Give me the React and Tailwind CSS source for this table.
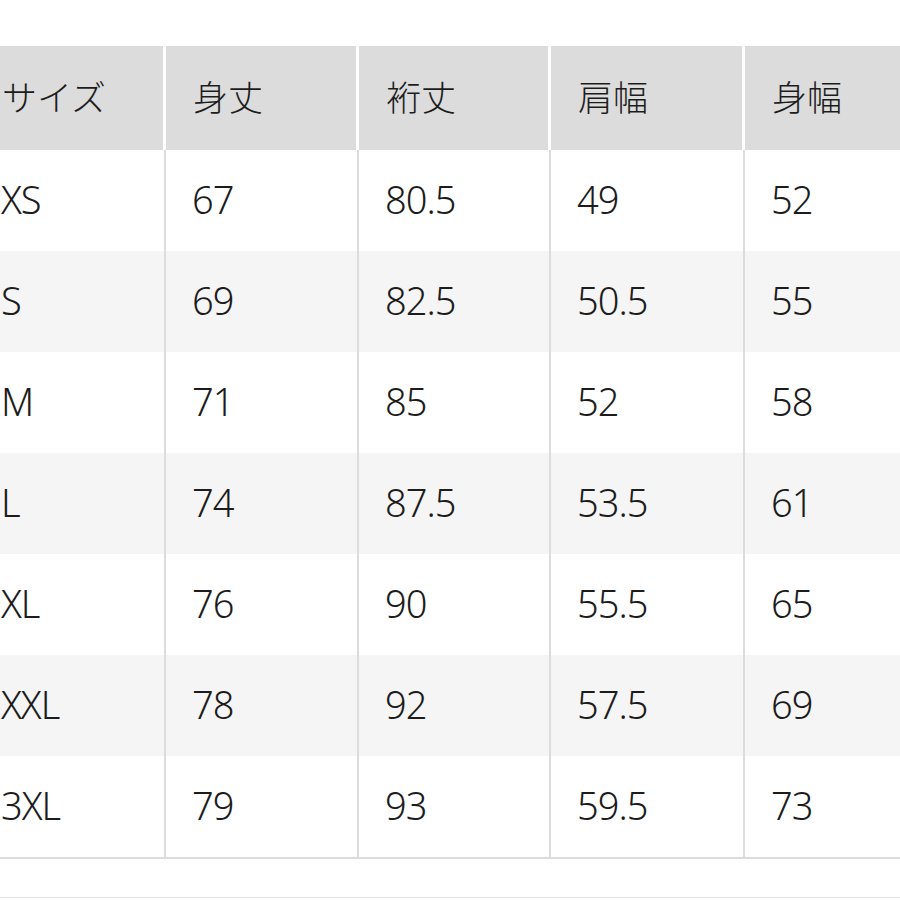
const headers = ["サイズ", "身丈", "裄丈", "肩幅", "身幅"];

const rows = [
  ["XS", "67", "80.5", "49", "52"],
  ["S", "69", "82.5", "50.5", "55"],
  ["M", "71", "85", "52", "58"],
  ["L", "74", "87.5", "53.5", "61"],
  ["XL", "76", "90", "55.5", "65"],
  ["XXL", "78", "92", "57.5", "69"],
  ["3XL", "79", "93", "59.5", "73"],
];

const cols = "grid grid-cols-[193px_193px_192px_194px_193px]";

export default function App() {
  return (
    <div className="w-[900px] h-[900px] overflow-hidden bg-white text-[#1c1c1c]">
      <div className="pt-[46px] ml-[-27px] w-[965px]">
        {/* header */}
        <div className={`${cols} h-[104px] bg-white`}>
          {headers.map((h, j) => (
            <div
              key={h}
              className={`flex items-center pb-[5px] ${j === 0 ? "pl-[29px]" : "pl-[27px]"} bg-[#dcdcdc] border-r-[3px] border-white text-[35px] font-light leading-none`}
              style={{ fontFamily: '"Noto Sans CJK JP", sans-serif' }}
            >
              {h}
            </div>
          ))}
        </div>

        {/* body */}
        <div className="border-b-2 border-[#dcdcdc]">
          {rows.map((r, i) => (
            <div
              key={r[0]}
              className={`${cols} h-[101px] ${i % 2 === 1 ? "bg-[#f5f5f5]" : "bg-white"}`}
            >
              {r.map((v, j) => (
                <div
                  key={j}
                  className={`flex items-center pb-[3px] ${j === 0 ? "pl-[28px]" : "pl-[26px]"} border-r-2 border-[#dcdcdc] text-[38px] font-light leading-none tracking-[-1px]`}
                  style={{ fontFamily: '"Noto Sans", sans-serif' }}
                >
                  {v}
                </div>
              ))}
            </div>
          ))}
        </div>

        <div className="h-[38px]" />
        <div className="h-px bg-[#e2e2e2]" />
      </div>
    </div>
  );
}
